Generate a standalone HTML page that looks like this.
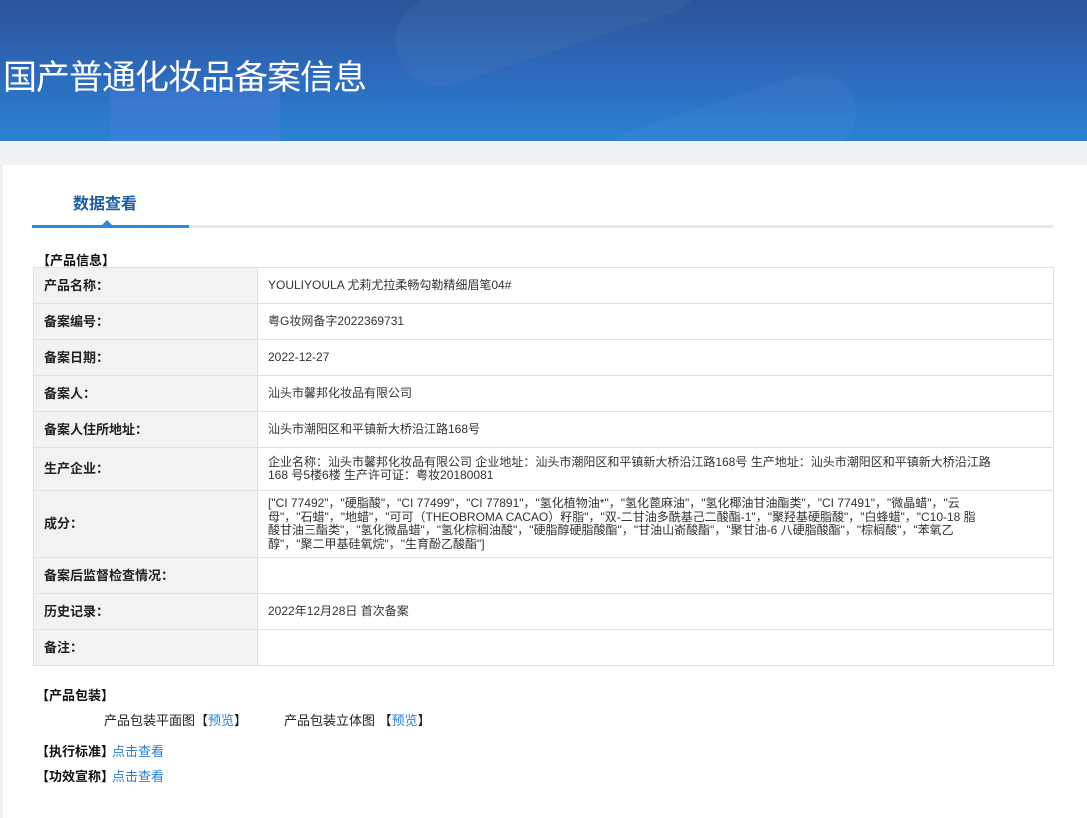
<!DOCTYPE html>
<html><head><meta charset="utf-8"><style>
*{margin:0;padding:0;box-sizing:border-box}
body{width:1087px;height:818px;overflow:hidden;background:#eef2f5;font-family:"Liberation Sans","Noto Sans CJK SC",sans-serif;font-size:12px;color:#333;position:relative}
.hd{position:absolute;left:0;top:0;width:1087px;height:141px;background:linear-gradient(180deg,#2b5498 0%,#2d6bbd 55%,#2a82d2 100%);overflow:hidden}
.hd .b1{position:absolute;left:390px;top:-40px;width:320px;height:90px;border-radius:45px;background:rgba(255,255,255,.04);transform:rotate(-18deg)}
.hd .b2{position:absolute;left:110px;top:90px;width:170px;height:60px;background:rgba(90,130,230,.25)}
.hd .b3{position:absolute;left:600px;top:100px;width:260px;height:80px;border-radius:40px;background:rgba(255,255,255,.03);transform:rotate(-18deg)}
.hd h1{position:absolute;left:3px;top:53px;font-size:34px;font-weight:normal;color:#fff;letter-spacing:-1px;font-family:"Noto Sans CJK SC",sans-serif;line-height:44px}
.panel{position:absolute;left:3px;top:165px;width:1084px;height:653px;background:#fff}
.tab{position:absolute;left:73px;top:190px;font-size:16px;font-weight:bold;color:#1b5da0}
.ul{position:absolute;left:32px;top:225px;width:1021px;height:3px;background:#e6e8ea}
.ul i{position:absolute;left:0;top:0;width:157px;height:3px;background:#2c8ad8}
.tri{position:absolute;left:102px;top:220px;width:0;height:0;border-left:5px solid transparent;border-right:5px solid transparent;border-bottom:5px solid #2c8ad8}
.sec{position:absolute;font-weight:bold;color:#111;font-size:13px}
table{position:absolute;left:33px;top:267px;width:1021px;border-collapse:collapse;border:1px solid #a9bfd8}
td{border:1px solid #e0e0e0;vertical-align:middle;font-size:12px;line-height:13.5px}
td.l{width:224px;background:#f2f2f2;font-weight:bold;font-size:13px;color:#222;padding-left:10px}
td.v{padding-left:10px;color:#333}
a{color:#2a7fd4;text-decoration:none}
.t{position:absolute;font-size:13px;color:#222}
</style></head><body>
<div class="hd"><div class="b1"></div><div class="b2"></div><div class="b3"></div><h1>国产普通化妆品备案信息</h1></div>
<div class="panel"></div>
<div class="tab">数据查看</div>
<div class="ul"><i></i></div><div class="tri"></div>
<div class="sec" style="left:37px;top:250px">【产品信息】</div>
<table>
<tr style="height:36px"><td class="l">产品名称：</td><td class="v">YOULIYOULA 尤莉尤拉柔畅勾勒精细眉笔04#</td></tr>
<tr style="height:36px"><td class="l">备案编号：</td><td class="v">粤G妆网备字2022369731</td></tr>
<tr style="height:36px"><td class="l">备案日期：</td><td class="v">2022-12-27</td></tr>
<tr style="height:36px"><td class="l">备案人：</td><td class="v">汕头市馨邦化妆品有限公司</td></tr>
<tr style="height:36px"><td class="l">备案人住所地址：</td><td class="v">汕头市潮阳区和平镇新大桥沿江路168号</td></tr>
<tr style="height:43px"><td class="l">生产企业：</td><td class="v">企业名称：汕头市馨邦化妆品有限公司 企业地址：汕头市潮阳区和平镇新大桥沿江路168号 生产地址：汕头市潮阳区和平镇新大桥沿江路<br>168 号5楼6楼 生产许可证：粤妆20180081</td></tr>
<tr style="height:67px"><td class="l">成分：</td><td class="v">["CI 77492"，"硬脂酸"，"CI 77499"，"CI 77891"，"氢化植物油*"，"氢化蓖麻油"，"氢化椰油甘油酯类"，"CI 77491"，"微晶蜡"，"云<br>母"，"石蜡"，"地蜡"，"可可（THEOBROMA CACAO）籽脂"，"双-二甘油多酰基己二酸酯-1"，"聚羟基硬脂酸"，"白蜂蜡"，"C10-18 脂<br>酸甘油三酯类"，"氢化微晶蜡"，"氢化棕榈油酸"，"硬脂醇硬脂酸酯"，"甘油山嵛酸酯"，"聚甘油-6 八硬脂酸酯"，"棕榈酸"，"苯氧乙<br>醇"，"聚二甲基硅氧烷"，"生育酚乙酸酯"]</td></tr>
<tr style="height:36px"><td class="l">备案后监督检查情况：</td><td class="v"></td></tr>
<tr style="height:36px"><td class="l">历史记录：</td><td class="v">2022年12月28日 首次备案</td></tr>
<tr style="height:36px"><td class="l">备注：</td><td class="v"></td></tr>
</table>
<div class="sec" style="left:36px;top:685px">【产品包装】</div>
<div class="t" style="left:104px;top:710px">产品包装平面图【<a>预览</a>】</div>
<div class="t" style="left:284px;top:710px">产品包装立体图 【<a>预览</a>】</div>
<div class="sec" style="left:36px;top:741px">【执行标准】</div><div class="t" style="left:112px;top:741px"><a>点击查看</a></div>
<div class="sec" style="left:36px;top:766px">【功效宣称】</div><div class="t" style="left:112px;top:766px"><a>点击查看</a></div>
</body></html>
